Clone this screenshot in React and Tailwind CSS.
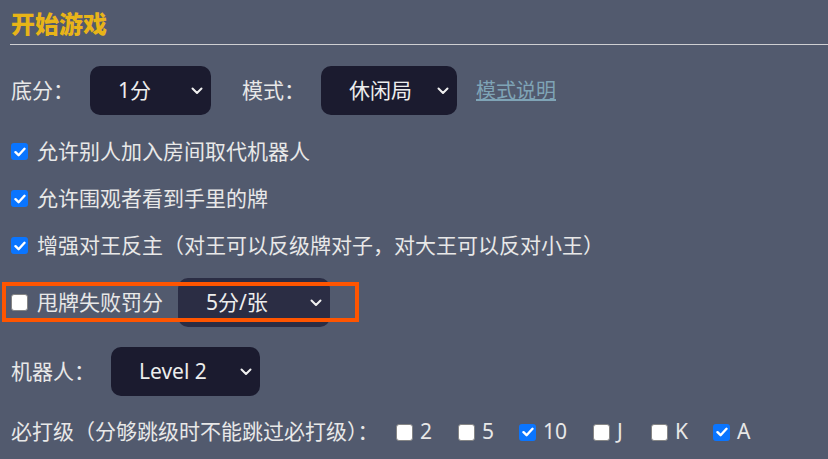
import React from "react";

const Chevron = () => (
  <svg width="12" height="8" viewBox="0 0 12 8" fill="none" className="shrink-0">
    <path d="M1.5 1.5 L6 6 L10.5 1.5" stroke="#f0f0f0" strokeWidth="2" strokeLinecap="round" strokeLinejoin="round" />
  </svg>
);

const Select = ({ value, width, light }) => (
  <div
    className={`flex items-center justify-between h-[49px] rounded-[10px] pl-[28px] pr-[8px] text-[21px] text-[#ededed] ${
      light ? "bg-[#2b2d44]" : "bg-[#1b1b2f]"
    }`}
    style={{ width }}
  >
    <span>{value}</span>
    <Chevron />
  </div>
);

const Check = ({ checked }) =>
  checked ? (
    <span className="flex items-center justify-center w-[17px] h-[17px] shrink-0 rounded-[3px] bg-[#0a75ff]">
      <svg width="12" height="10" viewBox="0 0 12 10" fill="none">
        <path d="M1.5 5.2 L4.6 8.2 L10.5 1.8" stroke="#ffffff" strokeWidth="2.4" strokeLinecap="round" strokeLinejoin="round" />
      </svg>
    </span>
  ) : (
    <span className="w-[17px] h-[17px] shrink-0 rounded-[3px] bg-white border border-[#858585]" />
  );

const CheckRow = ({ label, checked }) => (
  <div className="flex items-center h-[47px] gap-[9px]">
    <Check checked={checked} />
    <span>{label}</span>
  </div>
);

export default function App() {
  const levels = [
    { v: "2", c: false, w: "w-[62px]" },
    { v: "5", c: false, w: "w-[61px]" },
    { v: "10", c: true, w: "w-[74px]" },
    { v: "J", c: false, w: "w-[58px]" },
    { v: "K", c: false, w: "w-[62px]" },
    { v: "A", c: true, w: "w-[60px]" },
  ];

  return (
    <div
      className="w-[828px] h-[459px] overflow-hidden bg-[#525a6e] text-[21px] text-[#e8e8e8]"
      style={{ fontFamily: '"Noto Sans", "Noto Sans CJK SC", sans-serif' }}
    >
      <div className="ml-[10px] h-[45px] border-b border-[#cfcfd2] pt-[8px]">
        <h2 className="pl-[1px] text-[24px] leading-[32px] font-black text-[#e8b418]">开始游戏</h2>
      </div>

      <div className="pl-[11px]">
        <div className="flex items-center h-[49px] mt-[21px]">
          <span className="mr-[16px]">底分：</span>
          <Select value="1分" width={121} />
          <span className="ml-[31px] mr-[16px]">模式：</span>
          <Select value="休闲局" width={136} />
          <a href="#" className="ml-[19px] text-[20px] text-[#7fa4b6] underline">
            模式说明
          </a>
        </div>

        <div className="mt-[13px]">
          <CheckRow label="允许别人加入房间取代机器人" checked />
          <CheckRow label="允许围观者看到手里的牌" checked />
          <CheckRow label="增强对王反主（对王可以反级牌对子，对大王可以反对小王）" checked />
        </div>

        <div className="relative flex items-center h-[49px] mt-[9px] gap-[9px]">
          <Check checked={false} />
          <span className="mr-[6px]">甩牌失败罚分</span>
          <Select value="5分/张" width={152} light />
          <div className="absolute left-[-9px] top-[4px] w-[357px] h-[40px] border-[4px] border-[#ff5500] pointer-events-none" />
        </div>

        <div className="flex items-center h-[49px] mt-[20px]">
          <span className="mr-[16px]">机器人：</span>
          <Select value="Level 2" width={149} />
        </div>

        <div className="flex items-center h-[40px] mt-[16px]">
          <span className="w-[385px] shrink-0">必打级（分够跳级时不能跳过必打级）：</span>
          {levels.map((l) => (
            <label key={l.v} className={`flex items-center gap-[7px] shrink-0 ${l.w}`}>
              <Check checked={l.c} />
              <span>{l.v}</span>
            </label>
          ))}
        </div>
      </div>
    </div>
  );
}
